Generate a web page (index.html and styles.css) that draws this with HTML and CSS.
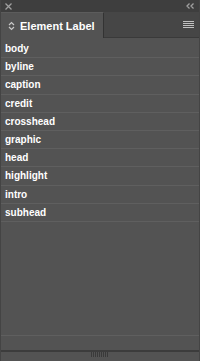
FILE: index.html
```html
<!DOCTYPE html>
<html lang="en">
<head>
    <meta name="viewport" content="width=device-width, initial-scale=1">
    <title>Element Label</title>
    <link rel="stylesheet" href="styles.css">
</head>
<body>

<div class="panel">
    <div class="titlebar">
        <svg class="close" width="7" height="7" viewBox="0 0 7 7">
            <path d="M0.5 0.5 L6.5 6.5 M6.5 0.5 L0.5 6.5" stroke="#a0a0a0" stroke-width="1.3"/>
        </svg>
        <svg class="collapse" width="8" height="6" viewBox="0 0 8 6">
            <path d="M3.5 0.5 L1 3 L3.5 5.5 M7.5 0.5 L5 3 L7.5 5.5" fill="none" stroke="#a0a0a0" stroke-width="1.3"/>
        </svg>
    </div>

    <div class="tabs">
        <div class="tab">
            <svg class="tab-icon" width="7" height="10" viewBox="0 0 7 10">
                <path d="M1 4 L3.5 1.5 L6 4 M1 6 L3.5 8.5 L6 6" fill="none" stroke="#c8c8c8" stroke-width="1.2"/>
            </svg>
            <span class="tab-title">Element Label</span>
        </div>
        <div class="tab-rest">
            <svg class="menu-icon" width="11" height="8" viewBox="0 0 11 8">
                <rect x="0" y="0" width="11" height="1" fill="#c0c0c0"/>
                <rect x="0" y="2" width="11" height="1" fill="#c0c0c0"/>
                <rect x="0" y="4" width="11" height="1" fill="#c0c0c0"/>
                <rect x="0" y="6" width="11" height="1" fill="#c0c0c0"/>
            </svg>
        </div>
    </div>

    <ul class="label-list">
        <li>body</li>
        <li>byline</li>
        <li>caption</li>
        <li>credit</li>
        <li>crosshead</li>
        <li>graphic</li>
        <li>head</li>
        <li>highlight</li>
        <li>intro</li>
        <li>subhead</li>
    </ul>

    <div class="footer"></div>
    <div class="grip-bar">
        <span class="grip"></span>
    </div>
</div>

</body>
</html>
```

FILE: styles.css
```css
body {
    margin: 0;
    font-family: "Liberation Sans", Arial, sans-serif;
    background-color: #535353;
}

.panel {
    width: 200px;
    height: 361px;
    display: flex;
    flex-direction: column;
    background-color: #535353;
    box-sizing: border-box;
    border-left: 1px solid #444;
    border-right: 1px solid #444;
}

.titlebar {
    height: 12px;
    background-color: #3e3e3e;
    display: flex;
    justify-content: space-between;
    align-items: center;
    padding: 0 5px 0 4px;
}

.tabs {
    height: 26px;
    display: flex;
    background-color: #464646;
}

.tab {
    width: 103px;
    display: flex;
    align-items: center;
    gap: 5px;
    padding-left: 7px;
    box-sizing: border-box;
    background-color: #535353;
    border-right: 1px solid #333;
    border-top: 1px solid #5c5c5c;
}

.tab-title {
    color: #fff;
    font-weight: bold;
    font-size: 11px;
}

.tab-rest {
    flex: 1;
    display: flex;
    justify-content: flex-end;
    align-items: center;
    padding-right: 5px;
    border-bottom: 1px solid #3a3a3a;
}

.label-list {
    list-style-type: none;
    margin: 0;
    padding: 2px 0 0;
}

.label-list li {
    height: 17.2px;
    line-height: 17.2px;
    padding-left: 4px;
    border-bottom: 1px solid #5f5f5f;
    color: #fff;
    font-weight: bold;
    font-size: 10px;
}

.footer {
    flex: 1;
    border-bottom: 1px solid #5f5f5f;
    margin-bottom: 14px;
}

.grip-bar {
    height: 9px;
    border-top: 2px solid #3c3c3c;
    display: flex;
    justify-content: center;
}

.grip {
    width: 18px;
    height: 5px;
    background: repeating-linear-gradient(90deg, #3a3a3a 0 1px, transparent 1px 2px);
}
```
